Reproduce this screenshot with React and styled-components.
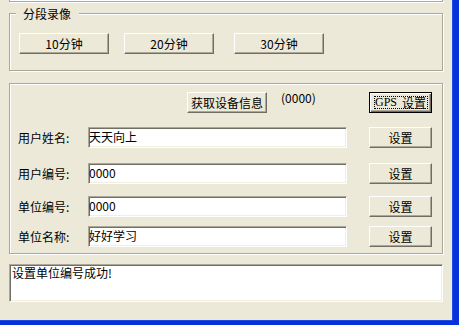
import React from "react";
import styled, { createGlobalStyle } from "styled-components";

const Global = createGlobalStyle`
  html, body { margin: 0; padding: 0; background: #ECE9D8; }
  * { box-sizing: border-box; }
`;

const FONT = `"Noto Sans CJK SC", "Liberation Sans", sans-serif`;

const Window = styled.div`
  width: 459px;
  height: 325px;
  background: #ECE9D8;
  border-right: 6px solid #0831d9;
  border-bottom: 4px solid #0831d9;
  box-shadow: inset -1px -1px 0 #1c4be8;
  display: flex;
  flex-direction: column;
  font-family: ${FONT};
  font-size: 12px;
  color: #000;
  overflow: hidden;
`;

const PrevEdge = styled.div`
  margin-left: 9px;
  width: 434px;
  height: 2px;
  flex: none;
  border: 1px solid #aca899;
  border-top: none;
  box-shadow: inset 1px -1px 0 #fff, 1px 1px 0 #fff;
`;

const Group = styled.div`
  position: relative;
  flex: none;
  margin-left: 9px;
  margin-top: ${(p) => p.$top}px;
  width: 434px;
  height: ${(p) => p.$h}px;
  border: 1px solid #aca899;
  box-shadow: inset 1px 1px 0 #fff, 1px 1px 0 #fff;
  display: flex;
  flex-direction: column;
`;

const GroupLabel = styled.span`
  position: absolute;
  top: -8px;
  left: 6px;
  padding: 0 8px 0 7px;
  background: #ECE9D8;
  line-height: 16px;
`;

const ButtonRow = styled.div`
  display: flex;
  padding: 19px 0 0 9px;
`;

const Button = styled.button`
  position: relative;
  flex: none;
  width: ${(p) => p.$w}px;
  height: 21px;
  margin-left: ${(p) => p.$ml || 0}px;
  padding: 0;
  background: #ECE9D8;
  border: 1px solid;
  border-color: #fff #716f64 #716f64 #fff;
  box-shadow: inset -1px -1px 0 #aca899;
  font-family: ${FONT};
  font-size: 12px;
  line-height: 17px;
  color: #000;
  display: flex;
  align-items: center;
  justify-content: center;
`;

const DefaultButton = styled(Button)`
  border: 1px solid #000;
  box-shadow: inset 1px 1px 0 #fff, inset -1px -1px 0 #716f64, inset -2px -2px 0 #aca899;
  &::after {
    content: "";
    position: absolute;
    inset: 3px 3px 3px 4px;
    border: 1px dotted #000;
  }
`;

const Serif = styled.span`
  font-family: "Liberation Serif", serif;
  font-size: 12px;
  margin-right: 5px;
`;

const TopRow = styled.div`
  display: flex;
  align-items: flex-start;
  margin-top: 8px;
  padding-left: 177px;
  padding-right: 10px;
`;

const Code = styled.span`
  margin-left: 14px;
  margin-top: -2px;
  line-height: 16px;
  flex: 1;
`;

const Row = styled.div`
  display: flex;
  align-items: center;
  margin-top: ${(p) => p.$top}px;
  padding-left: 8px;
  padding-right: 10px;
`;

const Label = styled.span`
  width: 70px;
  flex: none;
  line-height: 16px;
`;

const Field = styled.input`
  width: 259px;
  height: 21px;
  flex: none;
  margin: 0;
  padding: 0 1px 2px 0;
  background: #fff;
  border: 1px solid;
  border-color: #aca899 #fff #fff #aca899;
  box-shadow: inset 1px 1px 0 #716f64, inset -1px -1px 0 #f1efe2;
  font-family: ${FONT};
  font-size: 12px;
  color: #000;
  outline: none;
`;

const Spacer = styled.div`
  flex: 1;
`;

const Status = styled.div`
  flex: none;
  margin-left: 9px;
  margin-top: 10px;
  width: 434px;
  height: 38px;
  background: #fff;
  border: 1px solid;
  border-color: #aca899 #fff #fff #aca899;
  box-shadow: inset 1px 1px 0 #716f64, inset -1px -1px 0 #f1efe2;
  padding: 0 2px;
  line-height: 16px;
`;

const rows = [
  { label: "用户姓名:", value: "天天向上", top: 14 },
  { label: "用户编号:", value: "0000", top: 15 },
  { label: "单位编号:", value: "0000", top: 12 },
  { label: "单位名称:", value: "好好学习", top: 9 },
];

export default function App() {
  return (
    <>
      <Global />
      <Window>
        <PrevEdge />
        <Group $top={11} $h={58}>
          <GroupLabel>分段录像</GroupLabel>
          <ButtonRow>
            <Button $w={90}>10分钟</Button>
            <Button $w={90} $ml={15}>20分钟</Button>
            <Button $w={90} $ml={20}>30分钟</Button>
          </ButtonRow>
        </Group>
        <Group $top={12} $h={171}>
          <TopRow>
            <Button $w={80}>获取设备信息</Button>
            <Code>(0000)</Code>
            <DefaultButton $w={63}>
              <Serif>GPS</Serif>设置
            </DefaultButton>
          </TopRow>
          {rows.map((r) => (
            <Row key={r.label} $top={r.top}>
              <Label>{r.label}</Label>
              <Field readOnly value={r.value} />
              <Spacer />
              <Button $w={63}>设置</Button>
            </Row>
          ))}
        </Group>
        <Status>设置单位编号成功!</Status>
      </Window>
    </>
  );
}
